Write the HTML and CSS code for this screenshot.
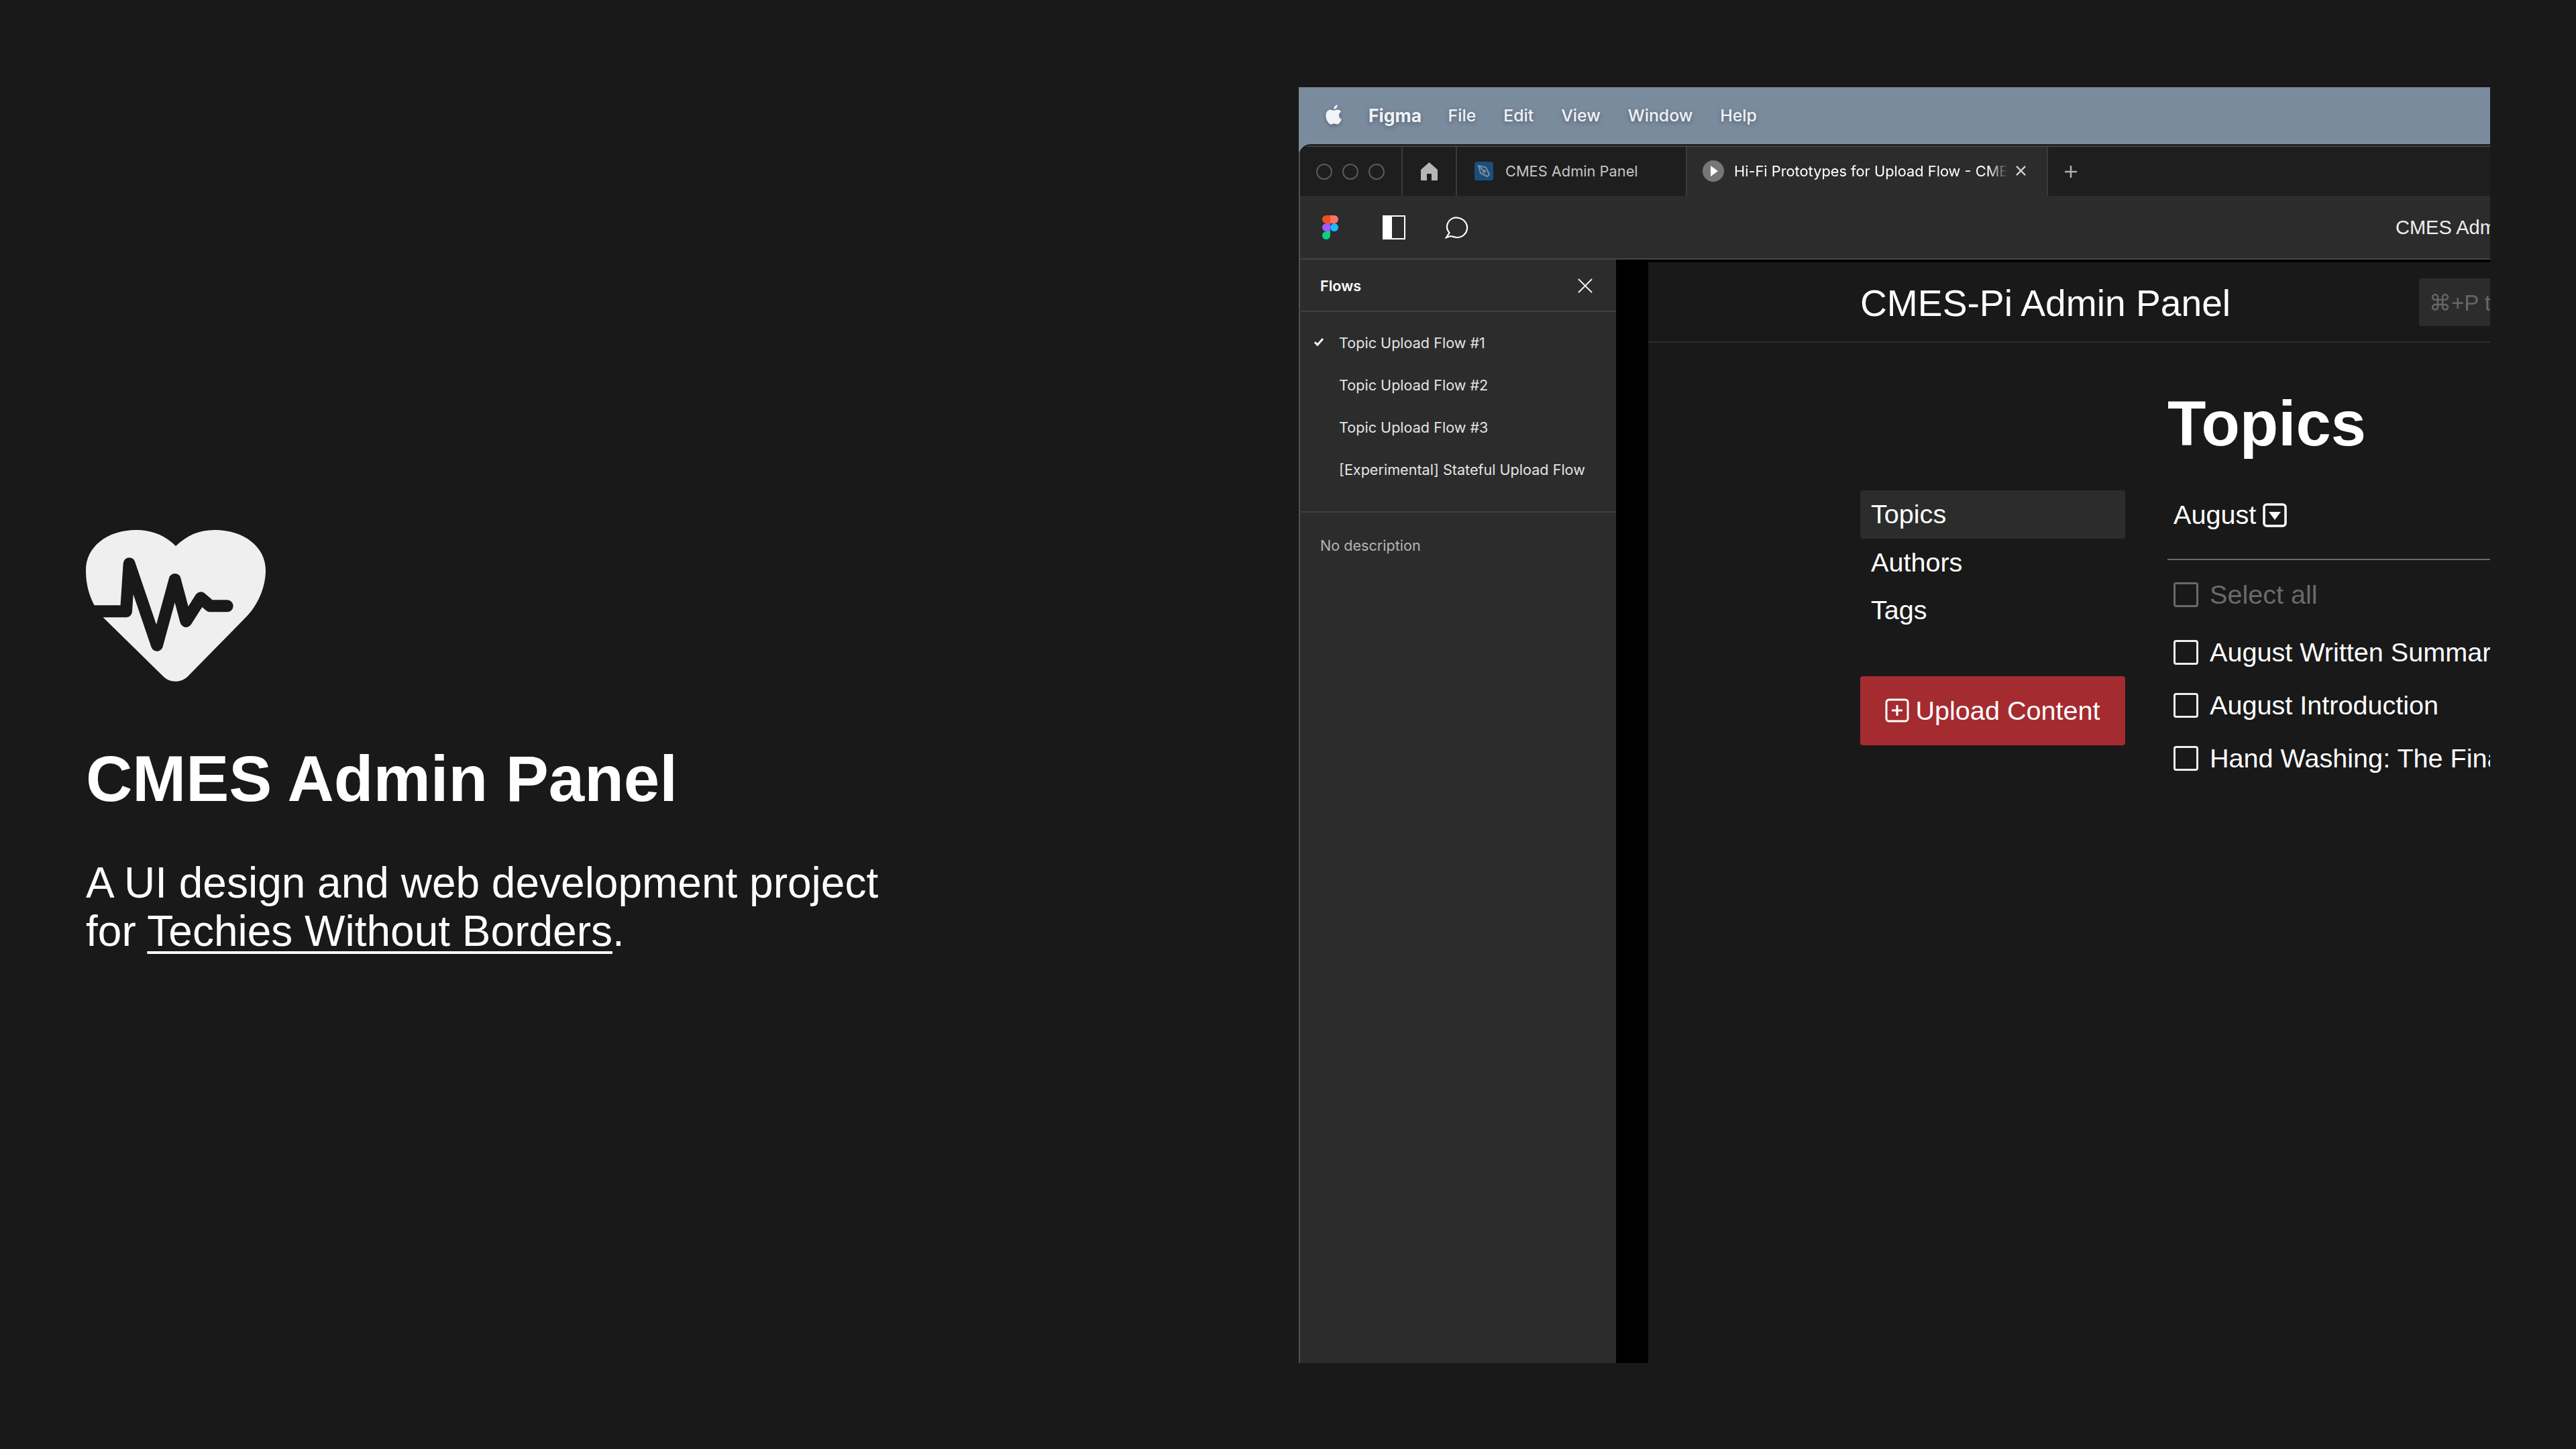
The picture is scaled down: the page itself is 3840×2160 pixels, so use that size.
FILE: index.html
```html
<!DOCTYPE html>
<html lang="en">
<head>
<meta charset="utf-8">
<title>CMES Admin Panel</title>
<link rel="stylesheet" href="styles.css">
</head>
<body>
<div class="page">
  <section class="intro">
    <svg class="heart" viewBox="84 60 804 678" aria-hidden="true">
      <path class="heart-fill" d="M486 132C535 85 590 60 660 60C790 60 888 135 888 240C888 320 850 400 800 450L540 715C510 745 460 745 430 715L160 450C115 400 84 330 84 240C84 135 180 60 310 60C380 60 440 85 486 132Z"/>
      <path class="heart-wave" d="M60 424H264L278 211L402 575L482 282L532 468L598 364L640 400H716"/>
    </svg>
    <h1 class="intro-title">CMES Admin Panel</h1>
    <p class="intro-text">A UI design and web development project<br>for <a class="intro-link" href="#">Techies Without Borders</a>.</p>
  </section>

  <section class="window">
    <div class="menubar">
      <svg class="apple" viewBox="1.500 2 19.500 24" aria-hidden="true"><path d="M17.600 14.800c0-3 2.400-4.400 2.500-4.500-1.400-2-3.500-2.300-4.200-2.300-1.800-.2-3.500 1-4.400 1s-2.300-1-3.800-1c-2 0-3.800 1.100-4.800 2.900-2 3.600-.5 8.800 1.500 11.700 1 1.400 2.100 3 3.600 2.900 1.500-.1 2-.9 3.800-.9s2.300.9 3.800.9 2.600-1.400 3.500-2.800c1.100-1.600 1.600-3.200 1.600-3.300-.1 0-3.100-1.200-3.100-4.600zM14.700 5.900c.8-1 1.300-2.300 1.200-3.700-1.100.1-2.500.8-3.300 1.700-.7.800-1.400 2.200-1.200 3.500 1.300.1 2.500-.6 3.300-1.500z"/></svg>
      <span class="menu-item menu-app">Figma</span>
      <span class="menu-item">File</span>
      <span class="menu-item">Edit</span>
      <span class="menu-item">View</span>
      <span class="menu-item">Window</span>
      <span class="menu-item">Help</span>
    </div>

    <div class="app">
      <div class="tabbar">
        <div class="traffic">
          <span class="dot"></span><span class="dot"></span><span class="dot"></span>
        </div>
        <div class="home-tab">
          <svg class="home-icon" viewBox="0 0 25 27" aria-hidden="true"><path d="M12.500 0L25 11V27H16V17H9V27H0V11Z"/></svg>
        </div>
        <div class="tab">
          <span class="file-icon">
            <svg viewBox="0 0 28 28" aria-hidden="true"><path d="M6 6L17 8.500L22 19L19 22L9 17Z"/><path d="M6 6L14 14"/><circle cx="14.500" cy="14.500" r="1.500"/></svg>
          </span>
          <span class="tab-label">CMES Admin Panel</span>
        </div>
        <div class="tab tab-active">
          <span class="play-icon"><svg viewBox="0 0 32 32" aria-hidden="true"><path d="M12 8L23 16L12 24Z"/></svg></span>
          <span class="tab-label tab-label-fade">Hi-Fi Prototypes for Upload Flow - CMES Admin Panel</span>
          <svg class="tab-close" viewBox="0 0 16 16" aria-hidden="true"><path d="M1 1L15 15M15 1L1 15"/></svg>
        </div>
        <svg class="tab-add" viewBox="0 0 20 20" aria-hidden="true"><path d="M10 1V19M1 10H19"/></svg>
      </div>

      <div class="toolbar">
        <svg class="figma-logo" viewBox="0 0 24 36" aria-hidden="true">
          <path fill="#f24e1e" d="M12 0H6a6 6 0 0 0 0 12h6Z"/>
          <path fill="#ff7262" d="M12 0h6a6 6 0 0 1 0 12h-6Z"/>
          <path fill="#a259ff" d="M12 12H6a6 6 0 0 0 0 12h6Z"/>
          <circle fill="#1abcfe" cx="18" cy="18" r="6"/>
          <path fill="#0acf83" d="M6 24h6v6a6 6 0 1 1-6-6Z"/>
        </svg>
        <span class="panel-icon"></span>
        <svg class="comment-icon" viewBox="0 0 36 34" aria-hidden="true"><path d="M3 32L7.500 25C4 21 3 16 5 11C8 4 15 1 22 3C30 5 35 12 34 19C33 27 26 32 19 32C15 32 12 30 9 30Z"/></svg>
        <span class="toolbar-title">CMES Admin Panel</span>
      </div>

      <div class="viewer">
        <aside class="flows">
          <div class="flows-head">
            <span class="flows-title">Flows</span>
            <svg class="flows-close" viewBox="0 0 22 22" aria-hidden="true"><path d="M1 1L21 21M21 1L1 21"/></svg>
          </div>
          <ul class="flow-list">
            <li class="flow-item flow-current">
              <svg class="flow-check" viewBox="0 0 16 14" aria-hidden="true"><path d="M2 7L6 11L14 2"/></svg>
              Topic Upload Flow #1
            </li>
            <li class="flow-item">Topic Upload Flow #2</li>
            <li class="flow-item">Topic Upload Flow #3</li>
            <li class="flow-item">[Experimental] Stateful Upload Flow</li>
          </ul>
          <p class="flows-desc">No description</p>
        </aside>

        <div class="gutter"></div>

        <main class="canvas">
          <header class="canvas-head">
            <span class="canvas-title">CMES-Pi Admin Panel</span>
            <span class="search">⌘+P to search</span>
          </header>
          <div class="columns">
            <nav class="side">
              <a class="side-link side-link-active">Topics</a>
              <a class="side-link">Authors</a>
              <a class="side-link">Tags</a>
              <button class="upload" type="button">
                <svg class="upload-icon" viewBox="0 0 36 36" aria-hidden="true"><rect x="2" y="2" width="32" height="32" rx="4"/><path d="M18 10V26M10 18H26"/></svg>
                Upload Content
              </button>
            </nav>
            <div class="topics">
              <h2 class="topics-title">Topics</h2>
              <div class="month">
                <span>August</span>
                <svg class="month-icon" viewBox="0 0 36 36" aria-hidden="true"><rect x="2" y="2" width="32" height="32" rx="4"/><path d="M9 13H27L18 25Z"/></svg>
              </div>
              <ul class="checks">
                <li class="check check-muted"><span class="box"></span>Select all</li>
                <li class="check"><span class="box"></span>August Written Summary</li>
                <li class="check"><span class="box"></span>August Introduction</li>
                <li class="check"><span class="box"></span>Hand Washing: The Final Frontier</li>
              </ul>
            </div>
          </div>
        </main>
      </div>
    </div>
  </section>
</div>
</body>
</html>
```

FILE: styles.css
```css
* { box-sizing: border-box; }
html, body { margin: 0; padding: 0; }
body {
  width: 3840px;
  height: 2160px;
  overflow: hidden;
  background: #191919;
  color: #fff;
  font-family: "Liberation Sans", Arial, sans-serif;
}
ul { list-style: none; margin: 0; padding: 0; }

.page {
  display: flex;
  justify-content: space-between;
  height: 2160px;
  padding: 130px 128px 128px 128px;
}

/* intro */
.intro { width: 1400px; padding-top: 660px; }
.heart { display: block; width: 268px; height: 226px; }
.heart-fill { fill: #efefef; }
.heart-wave { fill: none; stroke: #191919; stroke-width: 54; stroke-linejoin: round; stroke-linecap: round; }
.intro-title { margin: 90px 0 0; font-size: 96px; line-height: 110px; font-weight: 700; }
.intro-text { margin: 64px 0 0; font-size: 64px; line-height: 72px; font-weight: 400; }
.intro-link { color: #fff; text-decoration: underline; text-decoration-thickness: 4px; text-underline-offset: 8px; }

/* window */
.window {
  width: 1776px;
  height: 1902px;
  overflow: hidden;
  background: #7b8b9e;
  display: flex;
  flex-direction: column;
}
.menubar {
  flex: none;
  height: 85px;
  display: flex;
  align-items: center;
  padding: 0 0 2px 39px;
  font-family: Inter, sans-serif;
  font-size: 24.800px;
  font-weight: 500;
  color: #f0f2f4;
  text-shadow: 0 2px 6px rgba(30, 40, 55, .45);
}
.apple { width: 26px; height: 30px; fill: #f2f3f5; margin-right: 39px; margin-top: -2px; filter: drop-shadow(0 2px 3px rgba(30, 40, 55, .4)); }
.menu-item { margin-right: 41px; }
.menu-app { font-size: 26.500px; font-weight: 700; margin-right: 39.500px; }

.app {
  flex: 1;
  min-height: 0;
  display: flex;
  flex-direction: column;
  background: #2c2c2c;
  border-top: 2px solid #141414;
  border-top-left-radius: 18px;
  box-shadow: inset 2px 0 0 #505050;
  overflow: hidden;
}
.tabbar {
  flex: none;
  height: 75px;
  display: flex;
  align-items: stretch;
  background: #1e1e1e;
  border-top: 2px solid #444;
  box-shadow: inset 2px 0 0 #505050;
  font-family: Inter, sans-serif;
  font-size: 21.800px;
  color: #c4c4c4;
}
.traffic { width: 155px; display: flex; align-items: center; gap: 15px; padding-left: 26px; border-right: 2px solid #3a3a3a; }
.dot { width: 24px; height: 24px; border-radius: 50%; border: 2px solid #5a5a5a; }
.home-tab { width: 81px; display: flex; align-items: center; justify-content: center; border-right: 2px solid #3a3a3a; }
.home-icon { width: 25px; height: 27px; fill: #b6b6b6; }
.tab { width: 341px; display: flex; align-items: center; padding: 0 0 2px 26px; }
.file-icon { width: 28px; height: 28px; border-radius: 4px; background: #1a4f7c; margin-right: 18px; display: block; }
.file-icon svg { display: block; fill: none; stroke: #7c8c99; stroke-width: 2; }
.tab-active { width: 540px; padding-left: 23px; background: #2c2c2c; color: #fff; border-left: 2px solid #3a3a3a; border-right: 2px solid #3a3a3a; }
.play-icon { width: 32px; height: 32px; border-radius: 50%; background: #777; margin-right: 15px; flex: none; }
.play-icon svg { display: block; fill: #fff; }
.tab-label { white-space: nowrap; }
.tab-label-fade {
  width: 408px;
  overflow: hidden;
  -webkit-mask-image: linear-gradient(to right, #000 93%, transparent);
  mask-image: linear-gradient(to right, #000 93%, transparent);
}
.tab-close { width: 15px; height: 15px; margin-left: 12px; flex: none; fill: none; stroke: #d0d0d0; stroke-width: 2.500; }
.tab-add { width: 20px; height: 20px; margin: auto 0 auto 24px; fill: none; stroke: #b0b0b0; stroke-width: 2.500; }

.toolbar {
  flex: none;
  height: 95px;
  display: flex;
  align-items: center;
  padding-left: 35px;
  background: #2c2c2c;
  border-bottom: 2px solid #444;
  box-shadow: inset 2px 0 0 #505050;
  font-family: "Liberation Sans", sans-serif;
}
.figma-logo { width: 24px; height: 36px; flex: none; }
.panel-icon {
  width: 34px;
  height: 36px;
  margin-left: 66px;
  border: 2px solid #fff;
  border-left-width: 14px;
  flex: none;
}
.comment-icon { width: 36px; height: 34px; margin-left: 58px; flex: none; fill: none; stroke: #fff; stroke-width: 2.200; }
.toolbar-title { margin-left: 1382px; padding-top: 2px; flex: none; font-size: 29px; white-space: nowrap; color: #eee; }

.viewer { flex: 1; min-height: 0; display: flex; }
.flows {
  flex: none;
  width: 473px;
  background: #2c2c2c;
  box-shadow: inset 2px 0 0 #505050;
  font-family: Inter, sans-serif;
  font-size: 21.600px;
  color: #e4e4e4;
}
.flows-head {
  height: 78px;
  display: flex;
  align-items: center;
  justify-content: space-between;
  padding: 2px 35px 0 32px;
  border-bottom: 2px solid #404040;
}
.flows-title { font-weight: 600; color: #fff; }
.flows-close { width: 22px; height: 22px; fill: none; stroke: #eee; stroke-width: 2; }
.flow-list { padding: 14px 0 31px 60px; border-bottom: 2px solid #404040; }
.flow-item { position: relative; height: 63px; display: flex; align-items: center; white-space: nowrap; }
.flow-check { position: absolute; left: -38px; top: 24px; width: 16px; height: 14px; fill: none; stroke: #fff; stroke-width: 3; }
.flows-desc { margin: 36px 0 0 32px; color: #b4b4b4; }

.gutter { flex: none; width: 48px; background: #000; }
.canvas { flex: 1; min-width: 0; background: #191919; border-top: 4px solid #000; }
.canvas-head {
  height: 120px;
  display: flex;
  align-items: center;
  justify-content: space-between;
  padding-left: 316px;
  border-bottom: 2px solid #2c2c2c;
}
.canvas-title { font-size: 55.200px; white-space: nowrap; padding-top: 4px; }
.search {
  flex: none;
  width: 106px;
  height: 71px;
  padding: 3px 0 0 15px;
  overflow: hidden;
  white-space: nowrap;
  display: flex;
  align-items: center;
  font-size: 33px;
  color: #666;
  background: #2c2c2c;
  border-radius: 4px 0 0 4px;
}
.columns { display: flex; gap: 63px; padding-left: 316px; font-size: 39.600px; }
.side { flex: none; width: 395px; padding-top: 220px; display: flex; flex-direction: column; }
.side-link { height: 71.500px; padding-left: 16px; display: flex; align-items: center; border-radius: 4px; }
.side-link-active { background: #2c2c2c; }
.upload {
  margin-top: 62px;
  height: 103px;
  display: flex;
  align-items: center;
  justify-content: center;
  gap: 9px;
  border: 0;
  border-radius: 4px;
  background: #a42b30;
  color: #fff;
  font: inherit;
}
.upload-icon { width: 36px; height: 36px; fill: none; stroke: #fff; stroke-width: 3; }
.topics { flex: none; width: 600px; margin-right: -200px; }
.topics-title { margin: 66px 0 0; font-size: 94px; line-height: 110px; font-weight: 700; }
.month { height: 148px; padding: 58px 0 0 9px; border-bottom: 2px solid #6a6a6a; display: flex; align-items: flex-start; gap: 10px; width: 600px; }
.month-icon { width: 36px; height: 36px; margin-top: 5px; fill: #fff; }
.month-icon rect { fill: none; stroke: #fff; stroke-width: 3.500; }
.checks { padding: 5px 0 0 9px; }
.check { height: 79px; display: flex; align-items: center; gap: 17px; white-space: nowrap; }
.check-muted { height: 93px; color: #6a6a6a; }
.box { flex: none; width: 37px; height: 37px; border: 3px solid #eee; border-radius: 4px; }
.check-muted .box { border-color: #6a6a6a; }
```
